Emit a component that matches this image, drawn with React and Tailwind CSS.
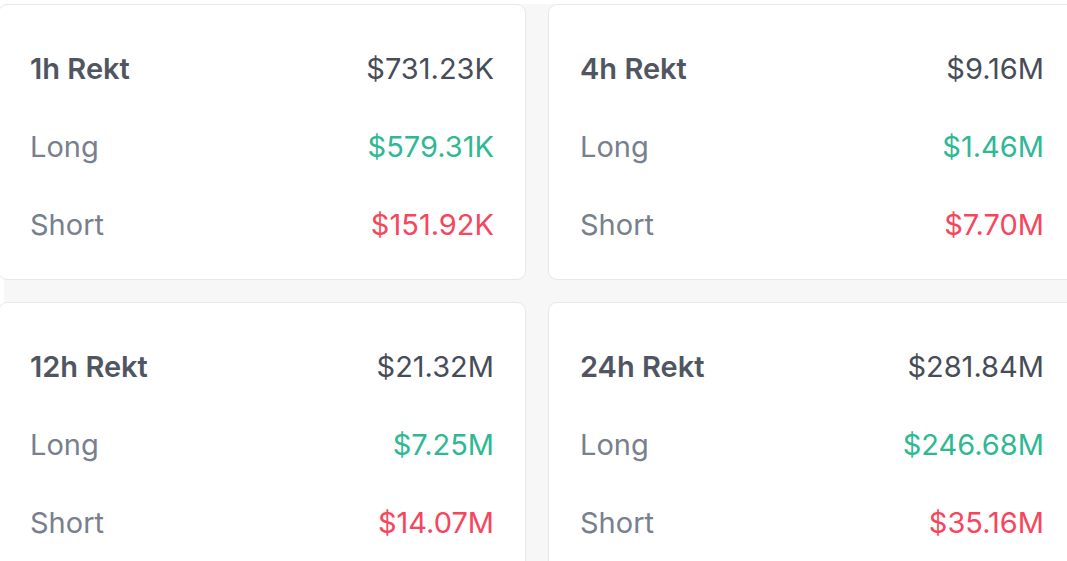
import React from 'react'

const cards = [
  { title: '1h Rekt', total: '$731.23K', long: '$579.31K', short: '$151.92K' },
  { title: '4h Rekt', total: '$9.16M', long: '$1.46M', short: '$7.70M' },
  { title: '12h Rekt', total: '$21.32M', long: '$7.25M', short: '$14.07M' },
  { title: '24h Rekt', total: '$281.84M', long: '$246.68M', short: '$35.16M' },
]

const Row = ({ label, value, labelClass, valueClass }) => (
  <div className="flex h-[78px] items-center justify-between">
    <span className={labelClass}>{label}</span>
    <span className={valueClass}>{value}</span>
  </div>
)

const RektCard = ({ card }) => (
  <div className="h-[276px] rounded-[9px] border border-[#e6e8ea] bg-white px-[31px] pt-[25px]">
    <Row label={card.title} value={card.total} labelClass="font-semibold text-[#4f5661]" valueClass="text-[#474d57]" />
    <Row label="Long" value={card.long} labelClass="text-[#78808d]" valueClass="text-[#2fb894]" />
    <Row label="Short" value={card.short} labelClass="text-[#78808d]" valueClass="text-[#f6465d]" />
  </div>
)

const App = () => {
  return (
    <div className="h-[561px] w-[1067px] overflow-hidden bg-white" style={{ fontFamily: 'Inter, "Noto Sans", sans-serif' }}>
      <div className="ml-1 mt-1 h-full bg-[#f7f7f8] text-[29px]">
        <div className="-ml-[6px] grid grid-cols-[528px_528px] gap-x-[22px] gap-y-[22px]">
          {cards.map(card => (
            <RektCard key={card.title} card={card} />
          ))}
        </div>
      </div>
    </div>
  )
}

export default App
